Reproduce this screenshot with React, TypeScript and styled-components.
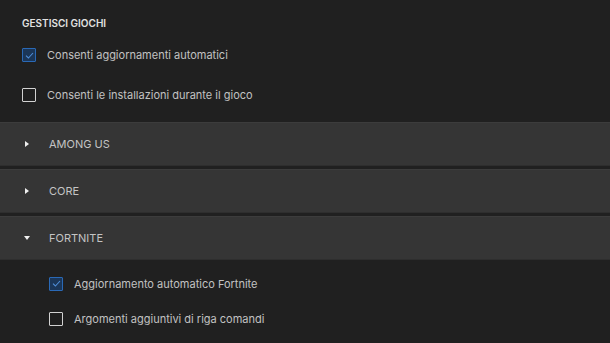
import React, { useState } from 'react';
import styled, { createGlobalStyle } from 'styled-components';

const GlobalStyle = createGlobalStyle`
  html, body {
    margin: 0;
    padding: 0;
    background: #202020;
  }
  body {
    font-family: Inter, 'Noto Sans', sans-serif;
    -webkit-font-smoothing: antialiased;
  }
`;

const Page = styled.div`
  width: 610px;
  height: 343px;
  overflow: hidden;
  background: #202020;
  display: flex;
  flex-direction: column;
`;

const Section = styled.div`
  padding: 0 22px;
  display: flex;
  flex-direction: column;
`;

const Heading = styled.h3`
  margin: 0;
  padding-top: 17px;
  height: 35px;
  box-sizing: border-box;
  font-size: 10px;
  line-height: 13px;
  font-weight: 600;
  color: #e2e2e2;
  text-transform: uppercase;
`;

const Row = styled.label<{ $height: number }>`
  display: flex;
  align-items: center;
  gap: 11px;
  height: ${(p) => p.$height}px;
  font-size: 11px;
  color: #c2c2c2;
  cursor: pointer;
`;

const Box = styled.span<{ $checked: boolean }>`
  width: 14px;
  height: 14px;
  box-sizing: border-box;
  flex-shrink: 0;
  display: flex;
  align-items: center;
  justify-content: center;
  border: 1.5px solid ${(p) => (p.$checked ? '#2a69b6' : '#d2d2d2')};
  background: ${(p) => (p.$checked ? '#1b3658' : 'transparent')};
  border-radius: 1px;
`;

const List = styled.div`
  margin-top: 7px;
  display: flex;
  flex-direction: column;
  gap: 3px;
`;

const Panel = styled.div`
  height: 44px;
  box-sizing: border-box;
  background: #353535;
  border-top: 1px solid #3c3c3c;
  border-bottom: 1px solid #2e2e2e;
  display: flex;
  align-items: center;
  padding-left: 23px;
  gap: 18px;
  font-size: 11px;
  color: #c4c4c4;
  text-transform: uppercase;
  cursor: pointer;
`;

const Caret = styled.span`
  width: 8px;
  display: flex;
  justify-content: center;
`;

const SubSection = styled.div`
  padding: 6px 0 0 49px;
  display: flex;
  flex-direction: column;
`;

const Check = ({ checked }: { checked: boolean }) => (
  <Box $checked={checked}>
    {checked && (
      <svg width='9' height='7' viewBox='0 0 9 7'>
        <path d='M1 3.6 L3.4 6 L8 1' fill='none' stroke='#4f8ed8' strokeWidth='1.1' />
      </svg>
    )}
  </Box>
);

const CaretIcon = ({ open }: { open: boolean }) => (
  <Caret>
    {open ? (
      <svg width='6' height='4' viewBox='0 0 6 4'>
        <path d='M0 0 H6 L3 4 Z' fill='#f0f0f0' />
      </svg>
    ) : (
      <svg width='4' height='6' viewBox='0 0 4 6'>
        <path d='M0 0 V6 L4 3 Z' fill='#f0f0f0' />
      </svg>
    )}
  </Caret>
);

const App = () => {
  const [general, setGeneral] = useState([true, false]);
  const [fortnite, setFortnite] = useState([true, false]);
  const [open, setOpen] = useState('FORTNITE');

  const generalLabels = [
    'Consenti aggiornamenti automatici',
    'Consenti le installazioni durante il gioco',
  ];
  const fortniteLabels = [
    'Aggiornamento automatico Fortnite',
    'Argomenti aggiuntivi di riga comandi',
  ];
  const games = ['Among Us', 'Core', 'Fortnite'];

  return (
    <Page>
      <GlobalStyle />
      <Section>
        <Heading>Gestisci giochi</Heading>
        {generalLabels.map((label, i) => (
          <Row
            key={label}
            $height={40}
            onClick={() => setGeneral(general.map((v, j) => (j === i ? !v : v)))}
          >
            <Check checked={general[i]} />
            {label}
          </Row>
        ))}
      </Section>
      <List>
        {games.map((game) => (
          <Panel
            key={game}
            onClick={() => setOpen(open === game.toUpperCase() ? '' : game.toUpperCase())}
          >
            <CaretIcon open={open === game.toUpperCase()} />
            {game}
          </Panel>
        ))}
      </List>
      {open === 'FORTNITE' && (
        <SubSection>
          {fortniteLabels.map((label, i) => (
            <Row
              key={label}
              $height={35}
              onClick={() => setFortnite(fortnite.map((v, j) => (j === i ? !v : v)))}
            >
              <Check checked={fortnite[i]} />
              {label}
            </Row>
          ))}
        </SubSection>
      )}
    </Page>
  );
};

export default App;
